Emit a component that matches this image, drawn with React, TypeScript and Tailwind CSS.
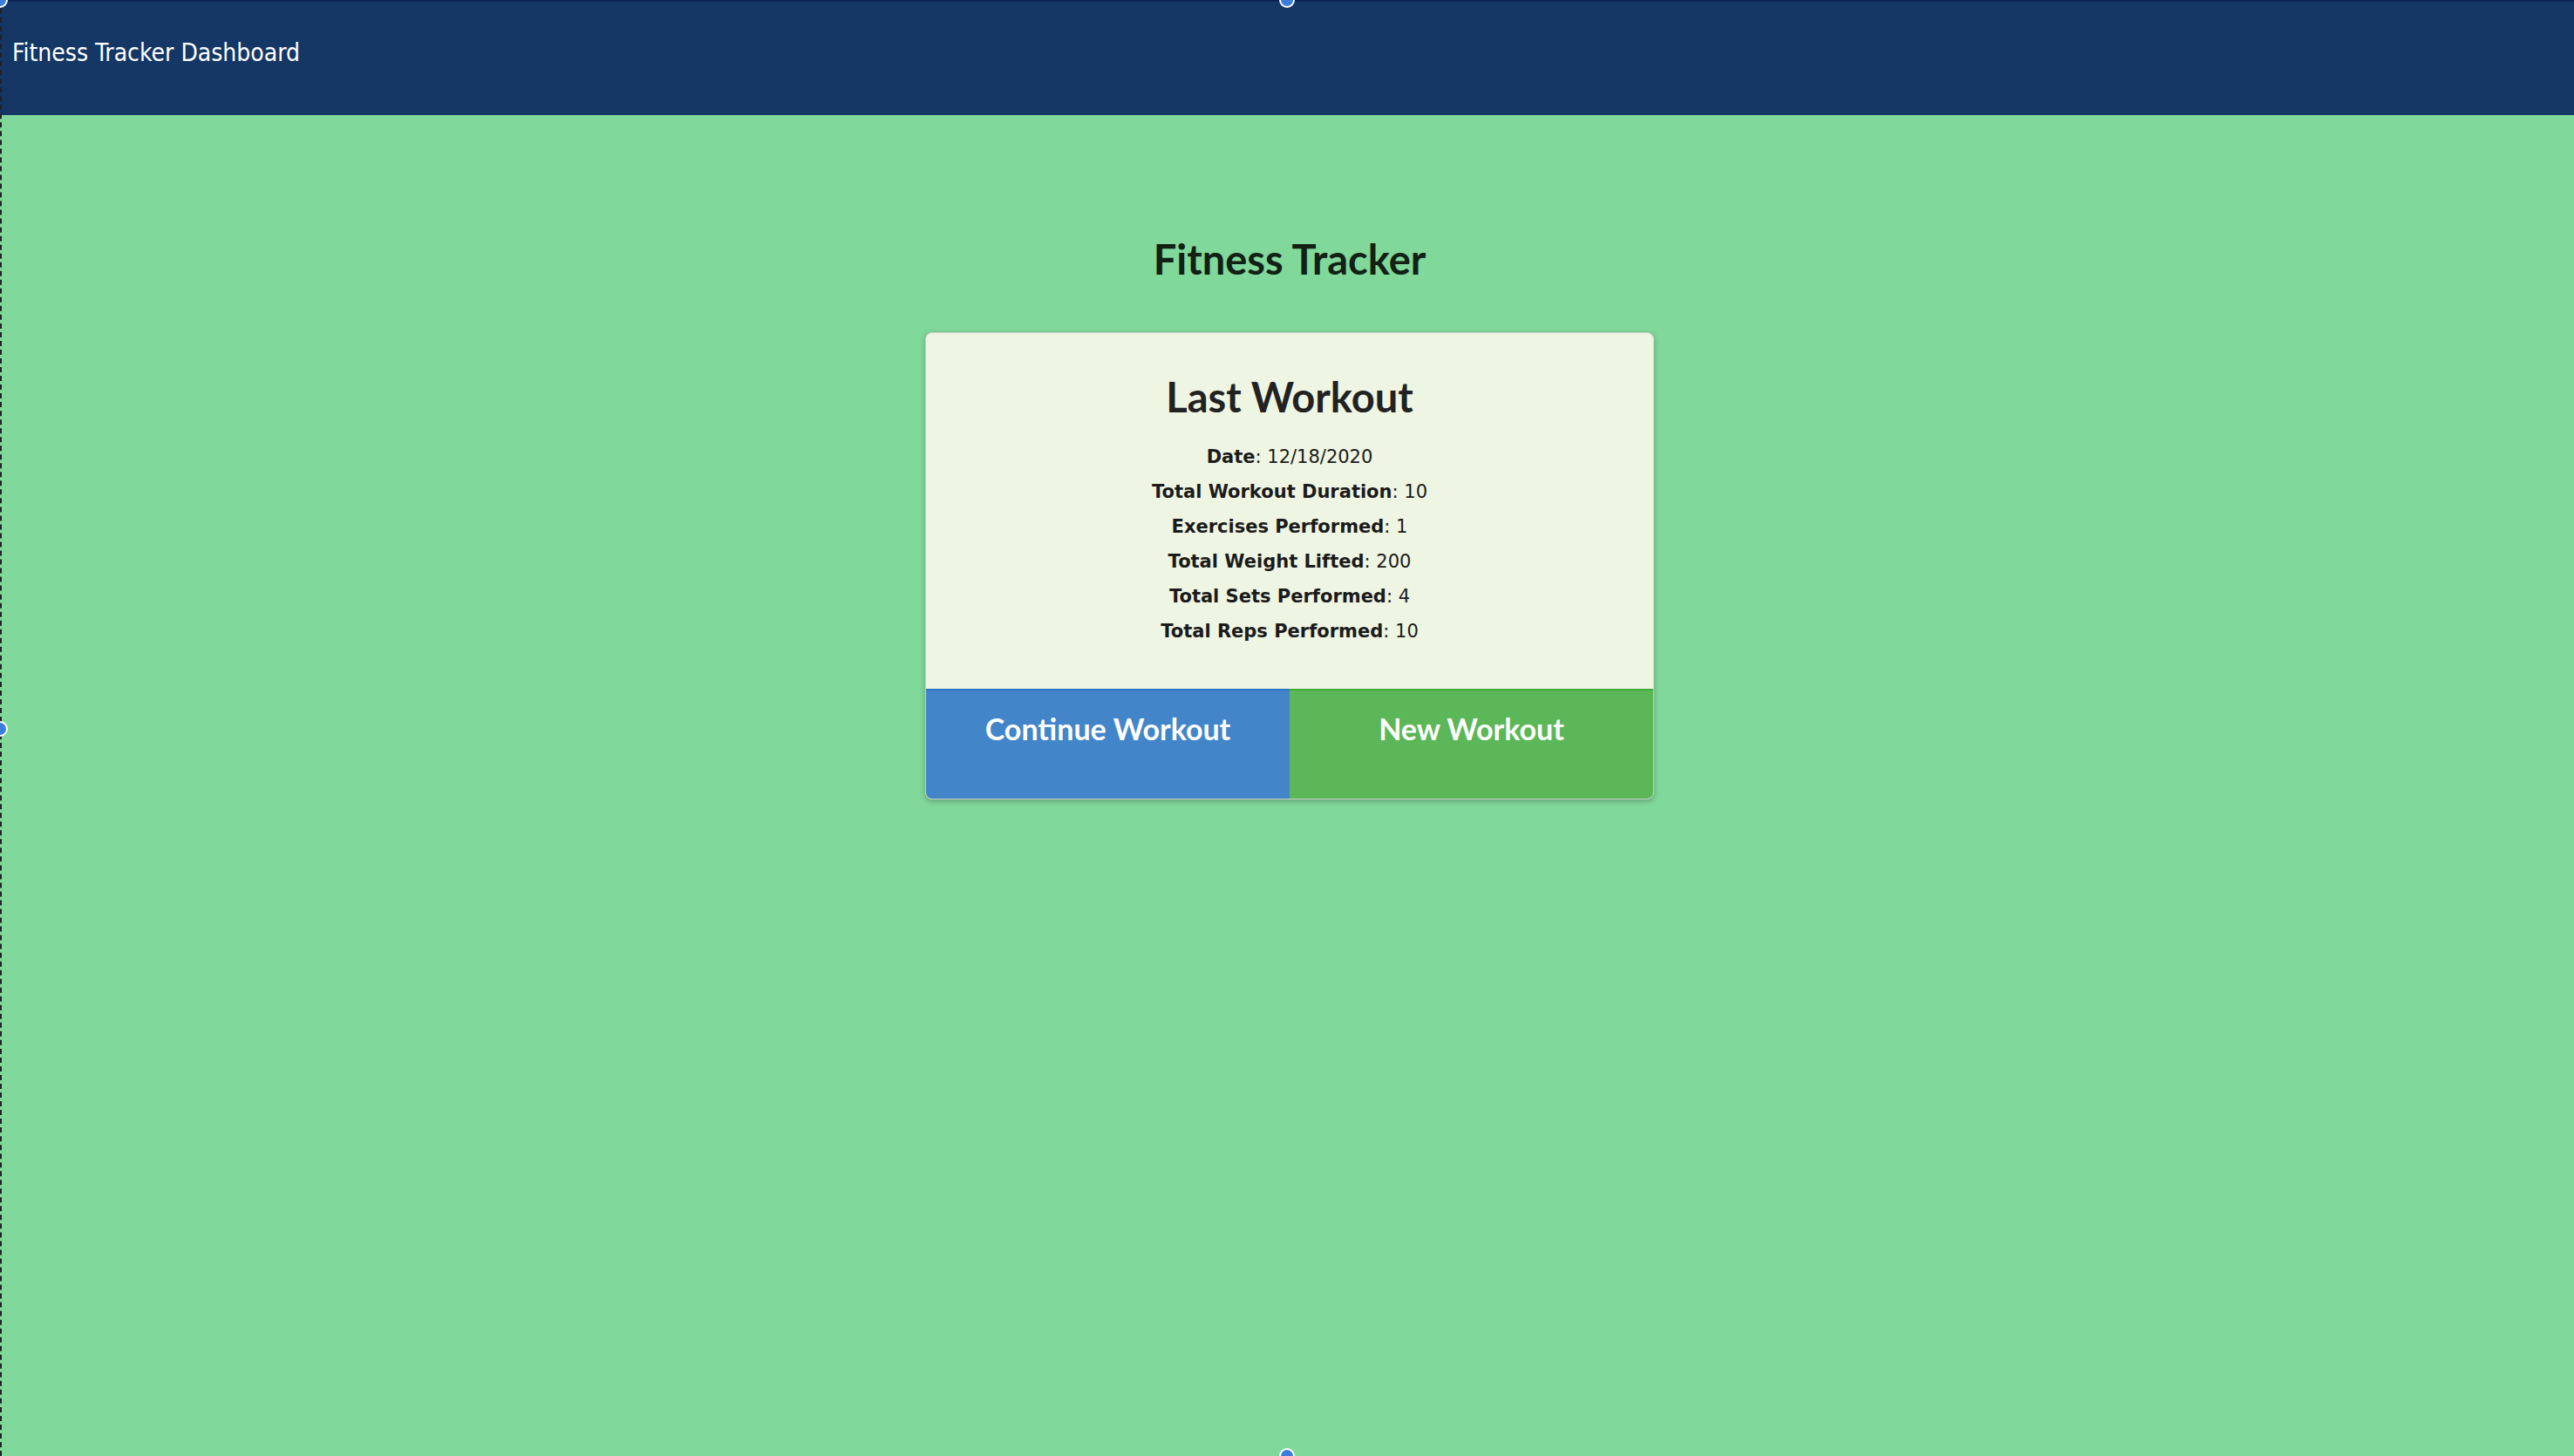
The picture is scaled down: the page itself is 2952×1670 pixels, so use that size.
import React from "react";

const stats = [
  { label: "Date", value: "12/18/2020" },
  { label: "Total Workout Duration", value: "10" },
  { label: "Exercises Performed", value: "1" },
  { label: "Total Weight Lifted", value: "200" },
  { label: "Total Sets Performed", value: "4" },
  { label: "Total Reps Performed", value: "10" },
];

function Handle({ className }: { className: string }) {
  return (
    <span
      className={
        "absolute w-[18px] h-[18px] rounded-full bg-[#3b7ddd] border-2 border-white -translate-x-1/2 -translate-y-1/2 " +
        className
      }
    />
  );
}

export default function App() {
  return (
    <div className="relative min-h-[1670px] bg-[#80d89b] overflow-hidden">
      <header className="h-[132px] bg-[#143766] border-t-2 border-[#0b2456] px-[14px] pt-[42px]">
        <h1 className="text-white text-[28px] leading-[34px] font-['DejaVu_Sans_Condensed',Tahoma,sans-serif]">
          Fitness Tracker Dashboard
        </h1>
      </header>

      <main className="flex flex-col items-center pl-[6px]">
        <h2 className="mt-[137px] text-[47px] leading-[56px] font-bold text-[#122114] font-['Lato',sans-serif]">
          Fitness Tracker
        </h2>

        <section className="mt-[56px] w-[836px] rounded-[8px] border border-[#c9cec4] bg-[#eef5e3] shadow-[0_2px_6px_rgba(0,0,0,0.25)] overflow-hidden">
          <div className="flex flex-col items-center pt-[45px] pb-[46px]">
            <h3 className="text-[47px] leading-[56px] font-bold text-[#222] font-['Lato',sans-serif]">
              Last Workout
            </h3>
            <ul className="mt-[21px] flex flex-col items-center font-['DejaVu_Sans',Verdana,sans-serif] text-[21px] leading-[40px] text-[#1b1b1b]">
              {stats.map((s) => (
                <li key={s.label}>
                  <span className="font-bold">{s.label}</span>: {s.value}
                </li>
              ))}
            </ul>
          </div>
          <div className="grid grid-cols-2 h-[126px] font-['Lato',sans-serif] text-white text-[34px] font-bold">
            <button className="bg-[#4285c9] border-t-2 border-[#2c74c4] flex justify-center pt-[18px]">
              Continue Workout
            </button>
            <button className="bg-[#5bb757] border-t-2 border-[#3fad3a] flex justify-center pt-[18px]">
              New Workout
            </button>
          </div>
        </section>
      </main>

      <div className="absolute left-0 top-0 h-full border-l-2 border-dashed border-[#222]" />
      <Handle className="left-0 top-0" />
      <Handle className="left-[1476px] top-0" />
      <Handle className="left-0 top-[836px]" />
      <Handle className="left-[1476px] top-[1670px]" />
    </div>
  );
}
